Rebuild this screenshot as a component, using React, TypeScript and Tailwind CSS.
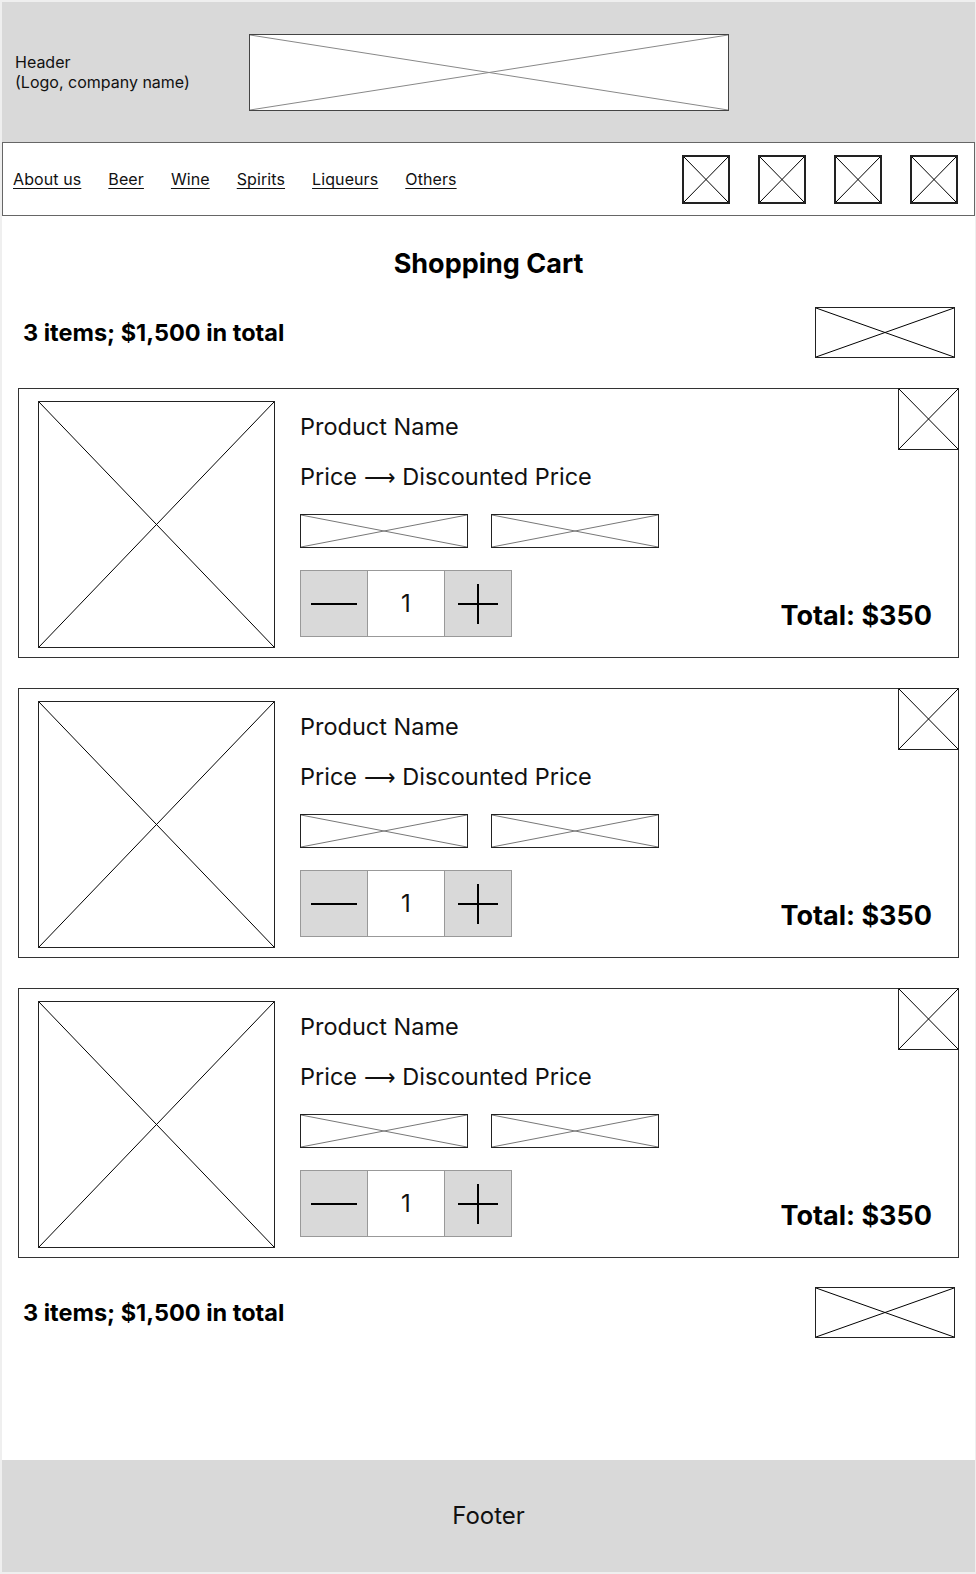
import clsx from 'clsx';

type XBoxProps = {
  className?: string;
  line?: string;
  floating?: boolean;
};

// wireframe placeholder: a box with two diagonals
function XBox({ className, line = '#000', floating = false }: XBoxProps) {
  return (
    <div className={clsx(floating ? 'absolute' : 'relative', 'shrink-0 bg-white', className)}>
      <svg
        className="absolute inset-0 h-full w-full"
        viewBox="0 0 100 100"
        preserveAspectRatio="none"
      >
        <line x1="0" y1="0" x2="100" y2="100" stroke={line} strokeWidth="1" vectorEffect="non-scaling-stroke" />
        <line x1="100" y1="0" x2="0" y2="100" stroke={line} strokeWidth="1" vectorEffect="non-scaling-stroke" />
      </svg>
    </div>
  );
}

const navLinks = ['About us', 'Beer', 'Wine', 'Spirits', 'Liqueurs', 'Others'];

function CartItem() {
  return (
    <div className="relative flex h-[270px] border border-[#333] pl-[19px] pt-[12px]">
      <XBox className="h-[247px] w-[237px] border border-[#222]" />

      <div className="ml-[25px] flex flex-1 flex-col pr-[26px]">
        <p className="mt-[10px] text-[23.5px] leading-8 text-[#111]">Product Name</p>
        <p className="mt-[18px] text-[23.5px] leading-8 text-[#111]">
          Price <span className="font-['DejaVu_Sans'] text-[22px] font-light">⟶</span> Discounted Price
        </p>

        <div className="mt-[20px] flex gap-[23px]">
          <XBox className="h-[34px] w-[168px] border border-[#222]" line="#777" />
          <XBox className="h-[34px] w-[168px] border border-[#222]" line="#777" />
        </div>

        <div className="mt-[22px] flex items-start justify-between">
          <div className="flex h-[67px] w-[212px] border border-[#999]">
            <button className="flex w-[67px] items-center justify-center border-r border-[#999] bg-[#d9d9d9]">
              <span className="block h-[2px] w-[46px] bg-black" />
            </button>
            <div className="flex w-[76px] items-center justify-center bg-white text-[24px] text-[#111]">1</div>
            <button className="relative flex flex-1 items-center justify-center border-l border-[#999] bg-[#d9d9d9]">
              <span className="block h-[2px] w-[40px] bg-black" />
              <span className="absolute h-[40px] w-[2px] bg-black" />
            </button>
          </div>

          <p className="mt-[28px] text-[27px] font-bold leading-9 text-black">Total: $350</p>
        </div>
      </div>

      {/* remove */}
      <XBox floating className="-right-px -top-px h-[62px] w-[61px] border border-[#222]" />
    </div>
  );
}

function Summary() {
  return (
    <div className="flex items-center justify-between pl-[5px] pr-[4px]">
      <p className="text-[23.5px] font-bold text-black">3 items; $1,500 in total</p>
      <XBox className="h-[51px] w-[140px] border border-[#222]" />
    </div>
  );
}

export default function App() {
  return (
    <div className="bg-[#efefef] pb-[2px] pl-[2px] pr-px pt-[2px] font-['Inter',sans-serif]">
      <div className="flex h-[1570px] flex-col bg-white">
        {/* Header */}
        <header className="flex h-[140px] items-center bg-[#d9d9d9] pl-[13px]">
          <div className="w-[234px] text-[16px] leading-5 text-[#111]">
            Header
            <br />
            (Logo, company name)
          </div>
          <XBox className="h-[77px] w-[480px] border border-[#444]" line="#888" />
        </header>

        {/* Nav */}
        <nav className="flex h-[74px] items-center justify-between border border-[#666] pl-[10px] pr-4">
          <div className="flex items-center gap-[27px]">
            {navLinks.map((name) => (
              <a
                key={name}
                href="#"
                className="text-[16px] tracking-[0.1px] text-[#111] underline underline-offset-[3px]"
              >
                {name}
              </a>
            ))}
          </div>
          <div className="flex items-center gap-[28px]">
            <XBox className="h-[49px] w-[48px] border-2 border-[#222]" />
            <XBox className="h-[49px] w-[48px] border-2 border-[#222]" />
            <XBox className="h-[49px] w-[48px] border-2 border-[#222]" />
            <XBox className="h-[49px] w-[48px] border-2 border-[#222]" />
          </div>
        </nav>

        {/* Cart */}
        <main className="flex flex-1 flex-col px-4">
          <h1 className="pt-[30px] text-center text-[27px] font-bold leading-9 text-black">Shopping Cart</h1>

          <div className="mt-[25px]">
            <Summary />
          </div>

          <div className="mt-[30px] flex flex-col gap-[30px]">
            <CartItem />
            <CartItem />
            <CartItem />
          </div>

          <div className="mt-[29px]">
            <Summary />
          </div>
        </main>

        {/* Footer */}
        <footer className="flex h-[112px] items-center justify-center bg-[#d9d9d9] text-[24px] text-[#111]">
          Footer
        </footer>
      </div>
    </div>
  );
}
